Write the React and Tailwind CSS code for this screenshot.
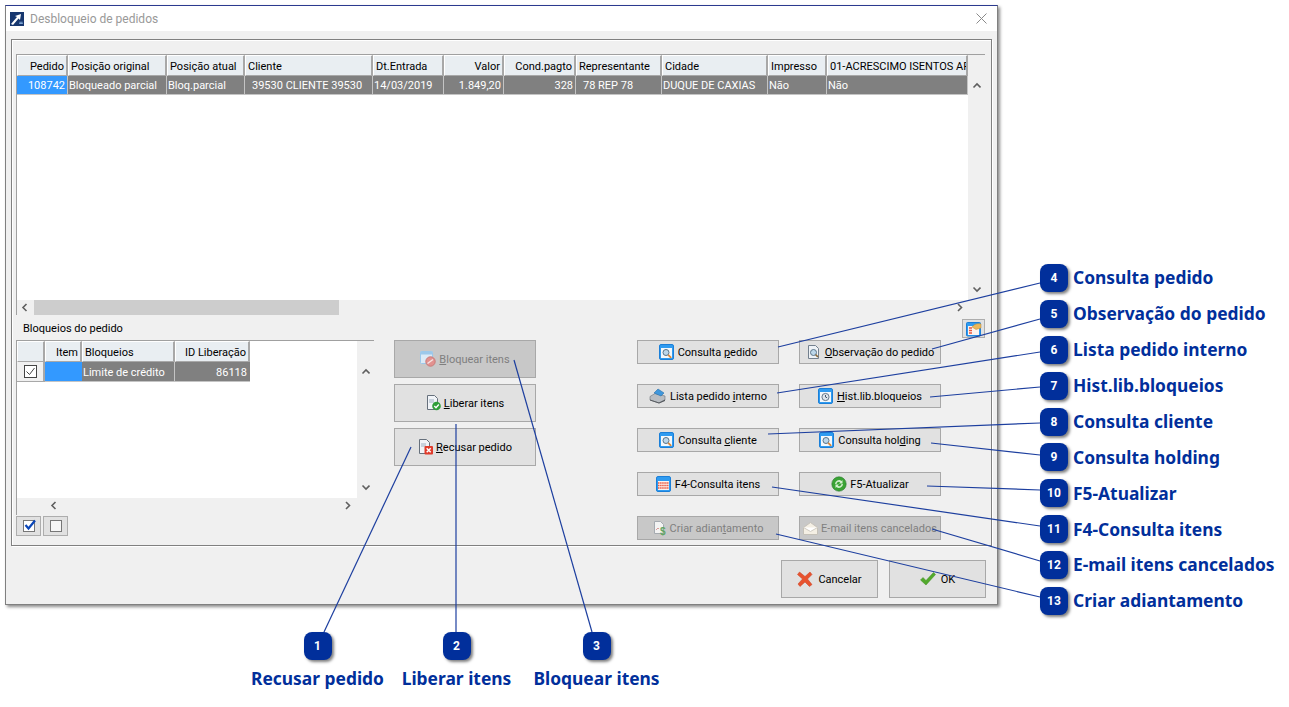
import React from "react";

const FONT = "font-['Roboto','Noto_Sans',sans-serif]";

const gridCols = [
  { label: "Pedido", value: "108742", right: true, selected: true },
  { label: "Posição original", value: "Bloqueado parcial" },
  { label: "Posição atual", value: "Bloq.parcial" },
  { label: "Cliente", value: "39530 CLIENTE 39530", indent: true },
  { label: "Dt.Entrada", value: "14/03/2019" },
  { label: "Valor", value: "1.849,20", right: true },
  { label: "Cond.pagto", value: "328", right: true },
  { label: "Representante", value: "78 REP 78", indent: true },
  { label: "Cidade", value: "DUQUE DE CAXIAS" },
  { label: "Impresso", value: "Não" },
  { label: "01-ACRESCIMO ISENTOS AP", value: "Não" },
];

const sideCallouts = [
  { n: 4, label: "Consulta pedido" },
  { n: 5, label: "Observação do pedido" },
  { n: 6, label: "Lista pedido interno" },
  { n: 7, label: "Hist.lib.bloqueios" },
  { n: 8, label: "Consulta cliente" },
  { n: 9, label: "Consulta holding" },
  { n: 10, label: "F5-Atualizar" },
  { n: 11, label: "F4-Consulta itens" },
  { n: 12, label: "E-mail itens cancelados" },
  { n: 13, label: "Criar adiantamento" },
];

const lines = [
  [778, 347, 1040, 283],
  [932, 349, 1040, 319],
  [777, 393, 1040, 352],
  [930, 397, 1040, 387],
  [768, 434, 1040, 423],
  [931, 443, 1040, 455],
  [927, 486, 1040, 490],
  [772, 487, 1040, 526],
  [932, 529, 1040, 561],
  [776, 534, 1040, 597],
  [411, 447, 324, 632],
  [456, 424, 456, 632],
  [514, 360, 592, 632],
];

const WindowIcon = ({ children }) => (
  <svg width="16" height="16" viewBox="0 0 16 16" className="shrink-0">
    <rect x="0.5" y="0.5" width="14" height="15" rx="1.5" fill="#2f9bf0" stroke="#1b7fd8" />
    <rect x="2" y="4" width="11" height="10" fill="#f4f8fb" />
    {children}
  </svg>
);

const SearchIcon = () => (
  <WindowIcon>
    <circle cx="7" cy="8.5" r="3" fill="#bcd7ea" stroke="#5b7488" />
    <path d="M9.2 10.8l3 3" stroke="#d9883a" strokeWidth="1.8" />
  </WindowIcon>
);

const ClockIcon = () => (
  <WindowIcon>
    <circle cx="7.5" cy="9" r="3.6" fill="#dfe7ee" stroke="#66788a" />
    <path d="M7.5 7v2l1.6 .8" stroke="#44566a" fill="none" />
  </WindowIcon>
);

const NoteIcon = () => (
  <svg width="16" height="16" viewBox="0 0 16 16" className="shrink-0">
    <path d="M2.5 1.5h7l3 3v10h-10z" fill="#eef2f6" stroke="#73808e" />
    <circle cx="7.5" cy="8.5" r="3" fill="#bcd7ea" stroke="#5b7488" />
    <path d="M9.6 10.6l2.4 2.4" stroke="#8a6a3a" strokeWidth="1.6" />
  </svg>
);

const PrinterIcon = () => (
  <svg width="18" height="16" viewBox="0 0 18 16" className="shrink-0">
    <path d="M1 8.5l5-3 10 2.5v4l-6 3-9-3z" fill="#b9bdc2" stroke="#6d7278" strokeWidth="0.6" />
    <path d="M5 5l4-4 6 4-3 3z" fill="#3f97dc" stroke="#2a6ea8" strokeWidth="0.6" />
    <path d="M1 11.5l9 3 6-3v1.5l-6 2.500-9-3z" fill="#55595e" />
  </svg>
);

const CalendarIcon = () => (
  <svg width="16" height="16" viewBox="0 0 16 16" className="shrink-0">
    <rect x="0.5" y="0.5" width="14" height="15" rx="1.5" fill="#2f9bf0" stroke="#1b7fd8" />
    <rect x="2" y="5" width="11" height="9" fill="#fdf3ee" />
    <path d="M2 7h11M2 9.500h11M2 12h11" stroke="#e8563f" strokeWidth="1.3" strokeDasharray="1.500 0.600" />
  </svg>
);

const RefreshIcon = () => (
  <svg width="16" height="16" viewBox="0 0 16 16" className="shrink-0">
    <circle cx="8" cy="8" r="7.2" fill="#3aa335" stroke="#27772a" strokeWidth="0.6" />
    <path d="M4 8a4 4 0 0 1 6.500-3l1-1v3.500H8l1.300-1.300A2.500 2.500 0 0 0 5.500 8zM12 8a4 4 0 0 1-6.500 3l-1 1V8.500H8l-1.300 1.300A2.500 2.500 0 0 0 10.500 8z" fill="#d4efcf" />
  </svg>
);

const SheetMoneyIcon = () => (
  <svg width="14" height="15" viewBox="0 0 14 15" className="shrink-0">
    <path d="M1.500 .5h6l3 3v9h-9z" fill="#f3f3f3" stroke="#a5aab0" />
    <path d="M3 9l2-2 1 1" stroke="#d99a9a" fill="none" />
    <text x="7" y="14" fontSize="10" fontWeight="700" fill="#62a565" fontFamily="Liberation Sans, sans-serif">$</text>
  </svg>
);

const MailIcon = () => (
  <svg width="15" height="13" viewBox="0 0 15 13" className="shrink-0">
    <path d="M.5 5.500L7.500 .5l7 5v7H.5z" fill="#f4efe4" stroke="#c5c1b8" />
    <path d="M.5 5.500l7 4 7-4" fill="#fff" stroke="#cfcbc2" />
  </svg>
);

const BlockIcon = () => (
  <svg width="16" height="16" viewBox="0 0 16 16" className="shrink-0">
    <rect x="0.5" y="0.5" width="12" height="12" rx="1" fill="#dbeaf6" stroke="#9cc8ea" />
    <rect x="0.5" y="0.5" width="12" height="3" fill="#9cc8ea" />
    <circle cx="10.500" cy="10.500" r="4.700" fill="#e2918f" stroke="#c97a78" />
    <path d="M7.500 12.500l5.500-4" stroke="#f6e3e2" strokeWidth="1.500" />
  </svg>
);

const DocBadgeIcon = ({ children }) => (
  <svg width="15" height="16" viewBox="0 0 15 16" className="shrink-0">
    <path d="M1.500 .5h7l3 3v11h-10z" fill="#f1f4f8" stroke="#66707c" />
    <path d="M3 5h5M3 7h5" stroke="#9fb0c2" />
    {children}
  </svg>
);

const CheckDocIcon = () => (
  <DocBadgeIcon>
    <circle cx="10.500" cy="11" r="4.300" fill="#2f9e3a" />
    <path d="M8.300 11l1.700 1.700 2.800-3.200" stroke="#fff" strokeWidth="1.400" fill="none" />
  </DocBadgeIcon>
);

const RedXDocIcon = () => (
  <DocBadgeIcon>
    <rect x="6.500" y="7" width="8.500" height="8.500" rx="1" fill="#df3b2b" />
    <path d="M8.700 9.200l4 4M12.700 9.200l-4 4" stroke="#fff" strokeWidth="1.500" />
  </DocBadgeIcon>
);

const BigX = () => (
  <svg width="16" height="16" viewBox="0 0 16 16" className="shrink-0">
    <path d="M2.500 1l5.500 4.500L13 1l2 2.500L10.500 8l4.500 5.500-2.500 2L8 11l-5 4.500-2-2.500L5.500 8 .5 3.500z" fill="#e8532f" stroke="#c83d1e" strokeWidth="0.5" />
  </svg>
);

const BigCheck = () => (
  <svg width="16" height="14" viewBox="0 0 16 14" className="shrink-0">
    <path d="M.5 8l2.500-2.500L6 8.500 13.500 .5 15.500 2.500 6 13z" fill="#52a92c" stroke="#3f8c20" strokeWidth="0.5" />
  </svg>
);

const TableHandIcon = () => (
  <svg width="16" height="16" viewBox="0 0 16 16">
    <rect x="0.5" y="1.500" width="14" height="13.500" rx="1" fill="#2f9bf0" stroke="#1b7fd8" />
    <rect x="2" y="5" width="11" height="9" fill="#fdf3ee" />
    <path d="M3 7h3M3 9.500h3M3 12h3" stroke="#e8563f" strokeWidth="1.300" />
    <path d="M6 6c2-3 6-4 9-3v4l-5 1.500z" fill="#e9b75c" stroke="#b98a35" strokeWidth="0.5" />
  </svg>
);

const Chevron = ({ dir, className = "" }) => {
  const d = {
    up: "M1.500 5.500L5 2l3.500 3.500",
    down: "M1.500 2.500L5 6l3.500-3.500",
    left: "M5.500 1L2 4.500 5.500 8",
    right: "M3 1l3.500 3.500L3 8",
  }[dir];
  return (
    <svg width="9" height="9" viewBox="0 0 9 9" className={className}>
      <path d={d} fill="none" stroke="#5f5f5f" strokeWidth="1.600" />
    </svg>
  );
};

const HeaderCell = ({ right, children }) => (
  <div
    className={`h-[21px] flex items-center pl-[2px] pr-[2px] pt-[1px] bg-[#e9eef2] border-t border-l border-t-white border-l-white border-r-2 border-b border-r-[#a8a8a8] border-b-[#a8a8a8] whitespace-nowrap overflow-hidden ${right ? "justify-end" : ""}`}
  >
    {children}
  </div>
);

const ActionButton = ({ icon, disabled, className = "", children }) => (
  <button
    className={`flex items-center justify-center gap-[3px] border border-[#a8a8a8] ${disabled ? "bg-[#c8c8c8] text-[#7f7f7f]" : "bg-[#e1e1e1] text-black"} ${className}`}
  >
    {icon}
    <span className="whitespace-nowrap">{children}</span>
  </button>
);

const Badge = ({ n }) => (
  <div className="w-7 h-7 shrink-0 rounded-lg bg-[#012f9b] shadow-[2px_2px_3px_rgba(0,0,0,0.5)] flex items-center justify-center text-white text-[12px] font-bold">
    {n}
  </div>
);

export default function App() {
  return (
    <div className={`relative w-[1289px] h-[707px] bg-white overflow-hidden text-[11px] leading-none ${FONT}`}>
      {/* Dialog */}
      <div className="ml-[5px] pt-[5px] w-[993px]">
        <div className="h-[600px] flex flex-col border border-[#808080] border-t-[#2b3a8f] shadow-[2px_2px_3px_rgba(0,0,0,0.45)]">
          <div className="h-[25px] shrink-0 bg-white flex items-center pl-[4px] pr-[10px] gap-[4px] text-[12px] text-[#999999]">
            <svg width="14" height="14" viewBox="0 0 14 14">
              <rect width="14" height="14" fill="#17376f" />
              <path d="M1 12l6-7-2-1 6-2-1 6-1.500-1.500L3 13z" fill="#fff" />
              <path d="M9 12l1-3 1 2 1-2 1 3z" fill="#7fa6d6" />
            </svg>
            <span className="flex-1 ml-[2px]">Desbloqueio de pedidos</span>
            <svg width="11" height="11" viewBox="0 0 11 11">
              <path d="M.5 .5l10 10M10.500 .5l-10 10" stroke="#8a8a8a" />
            </svg>
          </div>

          <div className="flex-1 bg-[#f0f0f0] flex flex-col px-[5px] pt-[8px]">
            {/* Group box */}
            <div className="h-[507px] shrink-0 border border-[#808080] shadow-[inset_1px_1px_0_#fff,1px_1px_0_#fff] pl-[4px] pt-[14px] pr-[6px]">
              {/* Orders grid */}
              <div className="h-[261px] flex flex-col border-t border-l border-[#a0a0a0] bg-white text-black">
                <div className="flex-1 flex min-h-0">
                  <div className="w-[951px]">
                    <div className="grid grid-cols-[51px_99px_78px_128px_71px_60px_72px_86px_106px_59px_141px]">
                      {gridCols.map((col) => (
                        <HeaderCell key={col.label} right={col.right}>{col.label}</HeaderCell>
                      ))}
                      {gridCols.map((col) => (
                        <div
                          key={col.label}
                          className={`h-[19px] flex items-center pt-[1px] whitespace-nowrap overflow-hidden text-white border-r border-b border-[#c4c4c4] ${col.selected ? "bg-[#3399ff]" : "bg-[#808080]"} ${col.right ? "justify-end pr-[2px]" : col.indent ? "pl-[7px]" : "pl-[1px]"}`}
                        >
                          {col.value}
                        </div>
                      ))}
                    </div>
                  </div>
                  <div className="w-[17px] bg-[#f0f0f0] flex flex-col items-center justify-between pt-[27px] pb-[6px]">
                    <Chevron dir="up" />
                    <Chevron dir="down" />
                  </div>
                </div>
                <div className="h-[15px] shrink-0 bg-[#f0f0f0] flex items-center">
                  <div className="w-[17px] flex justify-center"><Chevron dir="left" /></div>
                  <div className="w-[305px] h-full bg-[#cdcdcd]" />
                  <div className="flex-1 flex justify-end pr-[21px]"><Chevron dir="right" /></div>
                </div>
              </div>

              {/* Lower area */}
              <div className="flex">
                <div className="w-[358px] shrink-0">
                  <div className="h-[25px] flex items-center pl-[7px] pt-[1px]">Bloqueios do pedido</div>
                  <div className="h-[175px] flex flex-col border-t border-l border-[#a0a0a0] bg-white">
                    <div className="flex-1 flex min-h-0">
                      <div className="w-[340px]">
                        <div className="grid grid-cols-[28px_37px_93px_75px] w-[233px]">
                          <HeaderCell />
                          <HeaderCell right>Item</HeaderCell>
                          <HeaderCell>Bloqueios</HeaderCell>
                          <HeaderCell right>ID Liberação</HeaderCell>
                          <div className="h-[20px] bg-[#f0f0f0] border-r-2 border-b border-[#a8a8a8] flex items-center justify-center">
                            <div className="w-[13px] h-[13px] border border-[#444444] bg-white flex items-center justify-center">
                              <svg width="11" height="11" viewBox="0 0 11 11">
                                <path d="M1.500 5.500l3 3 5-6.500" fill="none" stroke="#444444" />
                              </svg>
                            </div>
                          </div>
                          <div className="h-[20px] bg-[#3399ff] border-b border-[#c4c4c4]" />
                          <div className="h-[20px] flex items-center pl-[1px] pt-[1px] text-white bg-[#808080] border-r border-b border-[#c4c4c4]">Limite de crédito</div>
                          <div className="h-[20px] flex items-center justify-end pr-[3px] pt-[1px] text-white bg-[#808080] border-b border-[#c4c4c4]">86118</div>
                        </div>
                      </div>
                      <div className="w-[17px] bg-[#f0f0f0] flex flex-col items-center justify-between pt-[27px] pb-[6px]">
                        <Chevron dir="up" />
                        <Chevron dir="down" />
                      </div>
                    </div>
                    <div className="h-[17px] shrink-0 bg-[#f0f0f0] flex items-center justify-between pl-[33px] pr-[22px] pb-[3px]">
                      <Chevron dir="left" />
                      <Chevron dir="right" />
                    </div>
                  </div>
                  <div className="flex gap-[2px] mt-[1px]">
                    <button className="w-[25px] h-[20px] bg-[#e1e1e1] border border-[#adadad] flex items-center justify-center">
                      <div className="relative w-[12px] h-[12px] border border-[#777777] bg-white">
                        <svg width="13" height="12" viewBox="0 0 13 12" className="absolute left-0 top-[-2px]">
                          <path d="M1.500 6l3 3.500 6.500-8" fill="none" stroke="#0a46b8" strokeWidth="2.200" />
                        </svg>
                      </div>
                    </button>
                    <button className="w-[25px] h-[20px] bg-[#e1e1e1] border border-[#adadad] flex items-center justify-center">
                      <div className="w-[12px] h-[12px] border border-[#777777] bg-[#f6f6f6]" />
                    </button>
                  </div>
                </div>

                <div className="w-[142px] shrink-0 ml-[20px] pt-[25px] flex flex-col gap-[6px]">
                  <ActionButton disabled icon={<BlockIcon />} className="h-[38px]"><u>B</u>loquear itens</ActionButton>
                  <ActionButton icon={<CheckDocIcon />} className="h-[38px]"><u>L</u>iberar itens</ActionButton>
                  <ActionButton icon={<RedXDocIcon />} className="h-[38px]"><u>R</u>ecusar pedido</ActionButton>
                </div>

                <div className="w-[348px] shrink-0 ml-[101px] pt-[4px]">
                  <div className="flex justify-end">
                    <button className="w-[23px] h-[19px] bg-[#e1e1e1] border border-[#adadad] flex items-center justify-center">
                      <TableHandIcon />
                    </button>
                  </div>
                  <div className="mt-[2px] grid grid-cols-[142px_142px] gap-x-[20px] gap-y-[20px]">
                    <ActionButton icon={<SearchIcon />} className="h-[24px]">Consulta <u>p</u>edido</ActionButton>
                    <ActionButton icon={<NoteIcon />} className="h-[24px]"><u>O</u>bservação do pedido</ActionButton>
                    <ActionButton icon={<PrinterIcon />} className="h-[24px]">Lista pedido <u>i</u>nterno</ActionButton>
                    <ActionButton icon={<ClockIcon />} className="h-[24px]"><u>H</u>ist.lib.bloqueios</ActionButton>
                    <ActionButton icon={<SearchIcon />} className="h-[24px]">Consulta <u>c</u>liente</ActionButton>
                    <ActionButton icon={<SearchIcon />} className="h-[24px]">Consulta hol<u>d</u>ing</ActionButton>
                    <ActionButton icon={<CalendarIcon />} className="h-[24px]">F4-Consulta itens</ActionButton>
                    <ActionButton icon={<RefreshIcon />} className="h-[24px]">F5-Atualizar</ActionButton>
                    <ActionButton disabled icon={<SheetMoneyIcon />} className="h-[24px]">Criar adian<u>t</u>amento</ActionButton>
                    <ActionButton disabled icon={<MailIcon />} className="h-[24px]">E-mail itens cancelados</ActionButton>
                  </div>
                </div>
              </div>
            </div>

            {/* Footer */}
            <div className="flex justify-end gap-[11px] pr-[6px] mt-[14px]">
              <ActionButton icon={<BigX />} className="w-[97px] h-[38px] gap-[5px]">Cancelar</ActionButton>
              <ActionButton icon={<BigCheck />} className="w-[97px] h-[38px] gap-[5px]">OK</ActionButton>
            </div>
          </div>
        </div>
      </div>

      {/* Callout leader lines */}
      <svg width="1289" height="707" className="absolute inset-0 pointer-events-none">
        {lines.map(([x1, y1, x2, y2]) => (
          <line key={`${x1}-${y1}`} x1={x1} y1={y1} x2={x2} y2={y2} stroke="#1d3f9f" strokeWidth="1.200" />
        ))}
      </svg>

      {/* Side callouts */}
      <div className="absolute left-[1040px] top-[264px] flex flex-col gap-[7.9px]">
        {sideCallouts.map((c) => (
          <div key={c.n} className="flex items-center gap-[5px] h-7">
            <Badge n={c.n} />
            <span className="font-['Noto_Sans',sans-serif] text-[17.4px] font-bold text-[#012f9b] whitespace-nowrap">{c.label}</span>
          </div>
        ))}
      </div>

      {/* Bottom callouts */}
      <div className="absolute left-[251px] top-[632px] flex flex-col items-center w-[133px] gap-[10px]">
        <Badge n={1} />
        <span className="font-['Noto_Sans',sans-serif] text-[17.4px] font-bold text-[#012f9b] whitespace-nowrap">Recusar pedido</span>
      </div>
      <div className="absolute left-[403px] top-[632px] flex flex-col items-center w-[107px] gap-[10px]">
        <Badge n={2} />
        <span className="font-['Noto_Sans',sans-serif] text-[17.4px] font-bold text-[#012f9b] whitespace-nowrap">Liberar itens</span>
      </div>
      <div className="absolute left-[534px] top-[632px] flex flex-col items-center w-[125px] gap-[10px]">
        <Badge n={3} />
        <span className="font-['Noto_Sans',sans-serif] text-[17.4px] font-bold text-[#012f9b] whitespace-nowrap">Bloquear itens</span>
      </div>
    </div>
  );
}
